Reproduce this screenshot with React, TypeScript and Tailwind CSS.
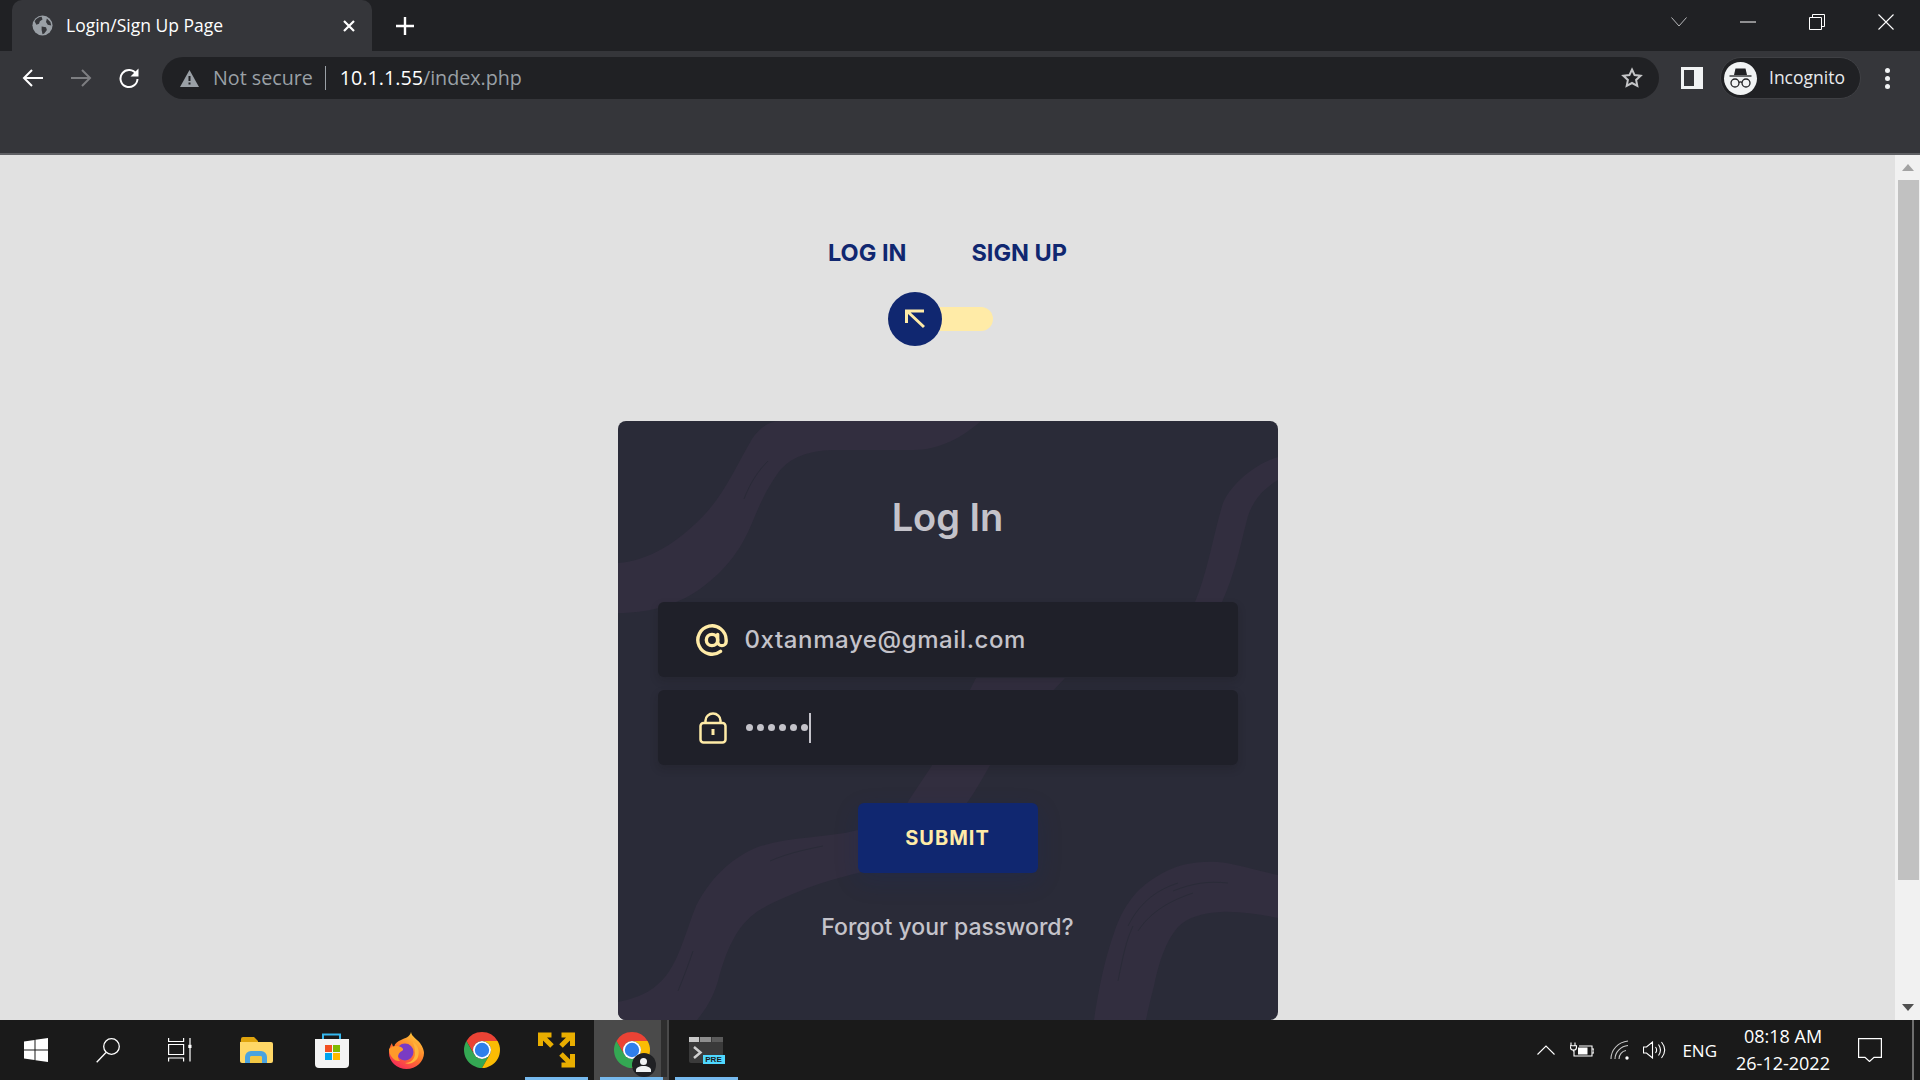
import React from 'react';

const uiFont = "font-['Open_Sans','Noto_Sans',sans-serif]";
const pageFont = "font-['Inter','Noto_Sans',sans-serif]";

const ChromeLogo: React.FC<{ size?: number }> = ({ size = 36 }) => (
    <svg width={size} height={size} viewBox="4 4 40 40">
        <path fill="#ea4335" d="M24 4a20 20 0 0 0-17.32 10l8.66 15A10 10 0 0 1 24 14h17.32A20 20 0 0 0 24 4z" />
        <path fill="#34a853" d="M6.68 14A20 20 0 0 0 24 44l8.66-15a10 10 0 0 1-17.32 0z" />
        <path fill="#fbbc04" d="M41.32 14H24a10 10 0 0 1 8.66 15L24 44a20 20 0 0 0 17.32-30z" />
        <circle cx="24" cy="24" r="10" fill="#fff" />
        <circle cx="24" cy="24" r="8" fill="#2f7fec" />
    </svg>
);

const BrowserChrome: React.FC = () => (
    <header className={`${uiFont} shrink-0`}>
        {/* Tab strip */}
        <div className="h-[51px] bg-[#202124] flex items-end pl-[12px]">
            <div className="w-[360px] h-[51px] bg-[#35363a] rounded-t-[10px] flex items-center pl-[20px] pr-[16px] text-white">
                <svg width="21" height="21" viewBox="0 0 24 24" className="shrink-0">
                    <circle cx="12" cy="12" r="11.5" fill="#9aa0a6" />
                    <path fill="#35363a" d="M3 7c2-3 5-5 8-5l1 3-3 2-1 3-3 1zM11 13l5 1 1 3-3 4-2 1-1-5zM17 4l4 4 1 4-4-1-2-3z" />
                </svg>
                <span className="ml-[13px] text-[17.5px] leading-none flex-1">Login/Sign Up Page</span>
                <svg width="14" height="14" viewBox="0 0 14 14" stroke="#fff" strokeWidth="2.2">
                    <path d="M2 2l10 10M12 2L2 12" />
                </svg>
            </div>
            <div className="w-[66px] h-[51px] flex items-center justify-center">
                <svg width="20" height="20" viewBox="0 0 20 20" stroke="#fff" strokeWidth="2.4">
                    <path d="M10 1v18M1 10h18" />
                </svg>
            </div>
            <div className="flex-1" />
            <div className="self-start h-[43px] flex items-center text-white">
                <div className="w-[68px] flex justify-center">
                    <svg width="16" height="10" viewBox="0 0 16 10" fill="none" stroke="#b8b9bb" strokeWidth="1"><path d="M.5.5L8 9l7.5-8.500" /></svg>
                </div>
                <div className="w-[69px] flex justify-center">
                    <svg width="16" height="2" viewBox="0 0 16 2" stroke="#fff"><path d="M0 1h16" /></svg>
                </div>
                <div className="w-[69px] flex justify-center">
                    <svg width="16" height="16" viewBox="0 0 16 16" fill="none" stroke="#fff"><path d="M.5 3.500h12v12H.5zM3.500 3.500v-3h12v12h-3" /></svg>
                </div>
                <div className="w-[69px] flex justify-center">
                    <svg width="16" height="16" viewBox="0 0 16 16" stroke="#fff" strokeWidth="1.1"><path d="M.5.5l15 15M15.500.5l-15 15" /></svg>
                </div>
            </div>
        </div>

        {/* Toolbar */}
        <div className="h-[104px] bg-[#35363a] border-b-2 border-[#5f6064] pt-[6px]">
            <div className="h-[42px] flex items-center">
                <div className="w-[162px] flex items-center pl-[22px] gap-[26px]">
                    <svg width="22" height="20" viewBox="0 0 22 20" fill="none" stroke="#fff" strokeWidth="2"><path d="M21 10H2M10 2l-8 8 8 8" /></svg>
                    <svg width="22" height="20" viewBox="0 0 22 20" fill="none" stroke="#7d7e81" strokeWidth="2"><path d="M1 10h19M12 2l8 8-8 8" /></svg>
                    <svg width="22" height="22" viewBox="0 0 22 22" fill="none" stroke="#fff" strokeWidth="2"><path d="M18.200 7A8.500 8.500 0 1 0 19.500 12" /><path fill="#fff" stroke="none" d="M20.500 1.500v8h-8z" /></svg>
                </div>
                <div className="w-[1497px] h-[42px] bg-[#202124] rounded-full flex items-center pl-[18px] pr-[16px]">
                    <svg width="19" height="17" viewBox="0 0 19 17" className="shrink-0">
                        <path fill="#9aa0a6" d="M9.500 0L19 17H0z" />
                        <path fill="#202124" d="M8.500 6h2v5h-2zM8.500 12.500h2v2h-2z" />
                    </svg>
                    <span className="ml-[14px] text-[19.7px] text-[#9aa0a6] leading-none">Not secure</span>
                    <span className="ml-[12px] w-px h-[24px] bg-[#9aa0a6]" />
                    <span className="ml-[14px] text-[19.7px] text-[#fff] leading-none">10.1.1.55<span className="text-[#9aa0a6]">/index.php</span></span>
                    <span className="flex-1" />
                    <svg width="22" height="22" viewBox="0 0 22 22" fill="none" stroke="#c4c5c7" strokeWidth="2"><path d="M11 2.500l2.600 5.600 6 .7-4.500 4.100 1.200 6L11 16l-5.300 2.900 1.200-6-4.500-4.100 6-.7z" /></svg>
                </div>
                <div className="w-[61px] flex justify-center pl-[4px]">
                    <svg width="22" height="22" viewBox="0 0 22 22"><path fill="#f1f3f4" fillRule="evenodd" d="M0 0h22v22H0zM3 3v16h10V3z" /></svg>
                </div>
                <div className="w-[141px] h-[42px] rounded-full bg-[#202124] border border-[#3f4044] flex items-center pl-[3px]">
                    <div className="w-[33px] h-[33px] rounded-full bg-[#f1f3f4] flex items-center justify-center shrink-0">
                        <svg width="27" height="27" viewBox="0 0 27 27">
                            <path fill="#202124" d="M8.500 3.500h10l1.500 6.500H7z" />
                            <path stroke="#202124" strokeWidth="1.300" d="M2.500 11h22" />
                            <g fill="none" stroke="#202124" strokeWidth="1.300">
                                <circle cx="8" cy="18" r="4" />
                                <circle cx="19" cy="18" r="4" />
                                <path d="M12 17.500c1-.8 2-.8 3 0" />
                            </g>
                        </svg>
                    </div>
                    <span className="ml-[12px] text-[17.5px] text-[#e8eaed] leading-none">Incognito</span>
                </div>
                <div className="flex-1 flex flex-col items-center gap-[3px] pr-[7px]">
                    <span className="w-[5px] h-[5px] rounded-full bg-[#f1f3f4]" />
                    <span className="w-[5px] h-[5px] rounded-full bg-[#f1f3f4]" />
                    <span className="w-[5px] h-[5px] rounded-full bg-[#f1f3f4]" />
                </div>
            </div>
        </div>
    </header>
);

const LoginCard: React.FC = () => (
    <div className={`${pageFont} relative shrink-0 w-[660px] h-[599px] mt-[75px] rounded-[8px] bg-[#2a2b38] overflow-hidden flex flex-col items-center px-[40px]`}>
        {/* Background brush pattern */}
        <svg width="660" height="599" viewBox="0 0 660 599" className="absolute inset-0" fill="#322e3f">
            <path d="M0 142C30 140 60 122 88 92C108 70 122 38 134 18C142 6 152 0 162 0H363C345 16 322 29 295 29H215C190 30 172 36 160 52C150 66 143 80 134 102C122 132 104 152 82 168C56 186 28 192 0 192Z" />
            <path d="M577 181C590 150 596 110 605 82C615 60 640 42 660 36V59C645 68 636 78 630 95C622 125 618 150 604 181Z" />
            <path d="M358 257H447C420 285 395 315 371 346C362 362 356 372 349 382C325 418 285 440 240 452C205 460 165 475 140 490C118 505 108 530 100 560C94 580 86 590 79 599H0V581C25 576 38 568 50 552C62 535 68 510 78 485C92 458 110 440 135 428C165 415 205 418 240 409C265 400 285 392 291 379L313 346Z" />
            <path d="M476 599C482 560 488 535 496 512C505 485 518 468 538 456C560 442 580 440 600 441C620 443 640 450 660 454V497C640 493 620 490 603 491C585 492 570 496 560 506C548 520 541 540 536 565C532 580 530 590 528 599Z" />
            <g fill="none" stroke="#2a2b38" strokeWidth="1">
                <path d="M510 505C520 485 535 470 560 462M520 510C530 495 545 482 575 472M555 470C575 462 590 460 610 462" />
                <path d="M500 560C505 535 508 520 515 505M75 530C70 545 66 555 60 570M152 440C170 432 190 428 205 425" />
                <path d="M150 40C140 50 132 62 126 78M640 100C636 120 632 140 626 165" />
            </g>
        </svg>

        <h1 className="relative mt-[74px] h-[44px] flex items-center text-[38px] font-semibold leading-none text-[#c4c3ca]">Log In</h1>

        <div className="relative mt-[63px] w-[580px] h-[75px] rounded-[6px] bg-[#1f2029] shadow-[0_4px_8px_rgba(21,21,21,0.2)] flex items-center">
            <svg width="34" height="34" viewBox="0 0 24 24" fill="none" stroke="#ffeba7" strokeWidth="2.400" strokeLinecap="round" strokeLinejoin="round" className="ml-[37px] shrink-0">
                <circle cx="12" cy="12" r="4" />
                <path d="M16 8v5a3 3 0 0 0 6 0v-1a10 10 0 1 0-4 8" />
            </svg>
            <span className="ml-[16px] text-[24px] tracking-[0.6px] font-medium leading-none text-[#c4c3ca]">0xtanmaye@gmail.com</span>
        </div>

        <div className="relative mt-[13px] w-[580px] h-[75px] rounded-[6px] bg-[#1f2029] shadow-[0_4px_8px_rgba(21,21,21,0.2)] flex items-center">
            <svg width="28" height="32" viewBox="0 0 28 32" fill="none" stroke="#ffeba7" strokeWidth="2.500" strokeLinejoin="round" className="ml-[41px] shrink-0">
                <rect x="1.500" y="11" width="25" height="19.500" rx="3" />
                <path d="M6.500 11V8.500a7.500 7 0 0 1 15 0V11" />
                <path d="M14 17v6" strokeWidth="3" />
            </svg>
            <div className="ml-[19px] flex items-center gap-[4px]">
                {[0, 1, 2, 3, 4, 5].map((i) => (
                    <span key={i} className="w-[7px] h-[7px] rounded-full bg-[#c4c3ca]" />
                ))}
            </div>
            <span className="ml-[1px] w-[2px] h-[30px] bg-[#c4c3ca]" />
        </div>

        <button className="relative mt-[38px] w-[180px] h-[70px] rounded-[6px] bg-[#102770] text-[#ffeba7] text-[20px] font-bold tracking-[1px] shadow-[0_8px_24px_0_rgba(16,39,112,0.2)]">
            SUBMIT
        </button>

        <p className="relative mt-[43px] text-[23px] font-medium leading-none text-[#c4c3ca]">Forgot your password?</p>
    </div>
);

const Scrollbar: React.FC = () => (
    <aside className="w-[25px] shrink-0 bg-[#f1f1f1] flex flex-col items-center">
        <svg width="12" height="7" viewBox="0 0 12 7" className="mt-[9px]"><path fill="#a3a3a3" d="M6 0l6 7H0z" /></svg>
        <div className="mt-[9px] ml-[2px] w-[21px] h-[700px] bg-[#c1c1c1]" />
        <span className="flex-1" />
        <svg width="12" height="7" viewBox="0 0 12 7" className="mb-[9px]"><path fill="#505050" d="M6 7l6-7H0z" /></svg>
    </aside>
);

const TaskSlot: React.FC<{ w?: string; active?: boolean; running?: boolean; children: React.ReactNode }> = ({ w = 'w-[75px]', active, running, children }) => (
    <div className={`relative ${w} h-[60px] flex items-center justify-center ${active ? 'bg-[#4a4a4a]' : ''}`}>
        {children}
        {running && <span className="absolute bottom-0 left-[6px] right-[6px] h-[3px] bg-[#76b9ed]" />}
    </div>
);

const Taskbar: React.FC = () => (
    <footer className={`${uiFont} h-[60px] shrink-0 bg-[#1a1a1a] flex items-center text-white`}>
        <TaskSlot w="w-[72px]">
            <svg width="24" height="24" viewBox="0 0 24 24" fill="#fff">
                <path d="M0 3.500l10.500-1.500v9.500H0zM11.500 1.800L24 0v11.500H11.500zM0 12.500h10.500V22L0 20.500zM11.500 12.500H24V24l-12.500-1.800z" />
            </svg>
        </TaskSlot>
        <TaskSlot w="w-[72px]">
            <svg width="24" height="25" viewBox="0 0 24 25" fill="none" stroke="#fff" strokeWidth="1.300"><circle cx="15.500" cy="8.500" r="7.800" /><path d="M10 14.500L.7 24.300" /></svg>
        </TaskSlot>
        <TaskSlot w="w-[72px]">
            <svg width="24" height="24" viewBox="0 0 24 24" fill="none" stroke="#fff" strokeWidth="1.200">
                <path d="M.6 0v3.500h15V0M.6 6.500h15v10H.6zM.6 23.500V20h15v3.500M22 0v7M22 10v13.500" />
                <path fill="#fff" stroke="none" d="M20.300 6.800h3.200v3.200h-3.200z" />
            </svg>
        </TaskSlot>
        <div className="w-[3px]" />
        <TaskSlot>
            <svg width="33" height="26" viewBox="0 0 33 26">
                <path fill="#e0a40d" d="M1 2a2 2 0 0 1 2-2h11l4 4v8H0z" />
                <path fill="#ffd766" d="M0 5h31a2 2 0 0 1 2 2v17a2 2 0 0 1-2 2H2a2 2 0 0 1-2-2z" />
                <path fill="#4aa3e0" d="M5 26v-6a6 6 0 0 1 6-6h10a6 6 0 0 1 6 6v6h-5v-5a2 2 0 0 0-2-2H12a2 2 0 0 0-2 2v5z" />
                <path fill="#f2c744" d="M10 26v-5a2 2 0 0 1 2-2h8a2 2 0 0 1 2 2v5z" />
            </svg>
        </TaskSlot>
        <TaskSlot>
            <svg width="36" height="36" viewBox="0 0 36 36">
                <path fill="none" stroke="#35b8f0" strokeWidth="2" d="M9 8V2.500h17V8" />
                <path fill="#f4f4f4" d="M1 7h34v25a4 4 0 0 1-4 4H5a4 4 0 0 1-4-4z" />
                <path fill="#f25022" d="M11 13h7v7h-7z" />
                <path fill="#7fba00" d="M19 13h7v7h-7z" />
                <path fill="#00a4ef" d="M11 21h7v7h-7z" />
                <path fill="#ffb900" d="M19 21h7v7h-7z" />
            </svg>
        </TaskSlot>
        <TaskSlot>
            <svg width="35" height="37" viewBox="0 0 35 37">
                <defs>
                    <linearGradient id="fx" x1="0.800" y1="0" x2="0.200" y2="1">
                        <stop offset="0" stopColor="#ffd23c" />
                        <stop offset="0.500" stopColor="#ff7a2a" />
                        <stop offset="1" stopColor="#f5245c" />
                    </linearGradient>
                </defs>
                <path fill="url(#fx)" d="M22 0c1 5 5 6 9 11 3 4 4 8 4 10a17.500 16 0 0 1-35 0c0-4 1-7 3-10 0 2 1 3 2 4 1-4 4-6 7-7 4-2 9-3 10-8z" />
                <circle cx="16" cy="20" r="8.500" fill="#7a3bc4" />
                <path fill="#ff9a2a" d="M0 17c3-3 8-4 12-2 2 1 3 3 1 4-3 1-6 6-2 10-5 1-11-5-11-12z" />
                <path fill="#ffb43a" d="M24 10c5 3 7 9 5 15-2 5-8 8-13 6 6 0 10-4 10-10 0-4-1-8-2-11z" />
            </svg>
        </TaskSlot>
        <TaskSlot>
            <ChromeLogo />
        </TaskSlot>
        <TaskSlot running>
            <svg width="37" height="36" viewBox="0 0 37 36" fill="none" stroke="#e9ae00" strokeWidth="5">
                <path d="M2.500 14V3h11M4 4l10 10" />
                <path d="M23.500 3h11v11M33 4L23 14" />
                <path d="M34.500 22v11h-11M33 32L23 22" />
            </svg>
        </TaskSlot>
        <TaskSlot active running>
            <div className="relative w-[36px] h-[36px]">
                <ChromeLogo />
                <div className="absolute -right-[6px] -bottom-[9px] w-[24px] h-[24px] rounded-full bg-[#202124] flex items-center justify-center">
                    <svg width="15" height="14" viewBox="0 0 15 14" fill="#f1f3f4"><circle cx="7.500" cy="3.500" r="3.500" /><path d="M0 14v-2c0-2 3-4 7.500-4s7.500 2 7.500 4v2z" /></svg>
                </div>
            </div>
            <span className="absolute top-0 bottom-[3px] right-[2px] w-[6px] bg-[#2e2e2e]" />
        </TaskSlot>
        <TaskSlot running>
            <div className="relative w-[34px] h-[26px] rounded-[2px] bg-[#3a3a3a] overflow-visible -translate-x-[1px]">
                <div className="flex h-[5px] gap-px">
                    <span className="w-[11px] bg-[#c9c9c9]" />
                    <span className="w-[11px] bg-[#8e8e8e]" />
                    <span className="w-[11px] bg-[#5a5a5a]" />
                </div>
                <svg width="10" height="13" viewBox="0 0 10 13" fill="none" stroke="#cfcfcf" strokeWidth="2.500" className="absolute left-[4px] top-[9px]"><path d="M1 1l6.500 5.500L1 12" /></svg>
                <span className="absolute -right-[2px] -bottom-[1px] w-[22px] h-[9px] bg-[#4fd8ff] text-[#1a1a1a] text-[8px] leading-[9px] font-semibold text-center font-['Liberation_Sans',sans-serif]">PRE</span>
            </div>
        </TaskSlot>

        <span className="flex-1" />

        {/* System tray */}
        <div className="flex items-center h-[60px]">
            <svg width="18" height="10" viewBox="0 0 18 10" fill="none" stroke="#fff" strokeWidth="1.100" className="mr-[15px]"><path d="M.5 9.500L9 1l8.500 8.500" /></svg>
            <svg width="24" height="16" viewBox="0 0 24 16" fill="none" stroke="#fff" strokeWidth="1.100" className="mr-[16px]">
                <path d="M4 8.500V14h18V4H9M21.900 7H24v4h-2.100" />
                <path fill="#fff" stroke="none" d="M8 5.500h9.500v7H8z" />
                <path d="M1 .5v3M5 .5v3M0 3.800h6.500v1.500a3 3 0 0 1-6 0zM3.500 7.500v2" />
            </svg>
            <svg width="20" height="20" viewBox="0 0 20 20" fill="none" stroke="#c9c9c9" strokeWidth="1.100" className="mr-[13px]">
                <path d="M1 19C1 10 8 2 18 1M5 19C5 12 11 6 18 5.500M9 19c0-4 3-8 7-8.500" />
                <circle cx="17" cy="18" r="1.700" fill="#fff" stroke="none" />
            </svg>
            <svg width="23" height="18" viewBox="0 0 23 18" fill="none" stroke="#fff" strokeWidth="1.100" className="mr-[16px]">
                <path d="M.5 6v6h3l6 5V1l-6 5zM12.500 6c1.500 2 1.500 4 0 6M15.500 3.500c2.500 3.500 2.500 7.500 0 11M18.500 1c4 5 4 11 0 16" />
            </svg>
            <span className="text-[17px] leading-none text-white mr-[16px]">ENG</span>
            <div className="w-[100px] flex flex-col items-center text-[18px] leading-[27px] text-white">
                <span>08:18 AM</span>
                <span>26-12-2022</span>
            </div>
            <div className="ml-[25px] mr-[30px]">
                <svg width="24" height="24" viewBox="0 0 24 24" fill="none" stroke="#fff" strokeWidth="1.200"><path d="M.6.600h22.800v18.800H16L11.500 23.500 7 19.400H.6z" /></svg>
            </div>
            <span className="w-[2px] h-[60px] bg-[#6e6e6e] mr-[6px]" />
        </div>
    </footer>
);

const App: React.FC = () => {
    return (
        <div className="w-[1920px] h-[1080px] flex flex-col overflow-hidden bg-[#e1e1e1]">
            <BrowserChrome />
            <div className="flex-1 min-h-0 flex">
                <main className="flex-1 min-w-0 overflow-hidden flex flex-col items-center">
                    {/* Log in / sign up switch */}
                    <div className={`${pageFont} mt-[83px] h-[30px] flex items-center gap-[65px] text-[23.5px] font-bold leading-none text-[#102770]`}>
                        <span>LOG IN</span>
                        <span>SIGN UP</span>
                    </div>
                    <div className="relative mt-[24px] mr-[15px] w-[105px] h-[54px] flex items-center">
                        <span className="w-full h-[24px] rounded-full bg-[#ffeba7]" />
                        <span className="absolute left-0 top-0 w-[54px] h-[54px] rounded-full bg-[#102770] flex items-center justify-center">
                            <svg width="20" height="20" viewBox="0 0 20 20" fill="none" stroke="#ffeba7" strokeWidth="3"><path d="M19 18L3 3M1.500 14V2H19" /></svg>
                        </span>
                    </div>
                    <LoginCard />
                </main>
                <Scrollbar />
            </div>
            <Taskbar />
        </div>
    );
};

export default App;
